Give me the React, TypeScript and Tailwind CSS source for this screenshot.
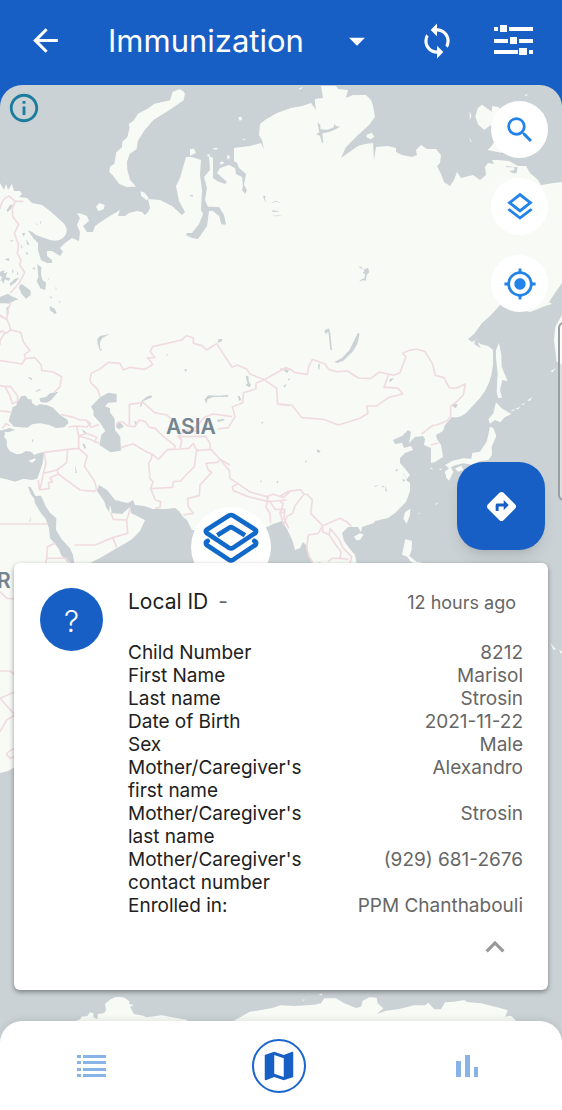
import React from "react";
import {
  MdArrowBack,
  MdArrowDropDown,
  MdDirections,
  MdInfoOutline,
  MdKeyboardArrowUp,
  MdMap,
  MdMyLocation,
  MdOutlineLayers,
  MdSearch,
  MdSync,
} from "react-icons/md";

const fields = [
  { label: "Child Number", value: "8212" },
  { label: "First Name", value: "Marisol" },
  { label: "Last name", value: "Strosin" },
  { label: "Date of Birth", value: "2021-11-22" },
  { label: "Sex", value: "Male" },
  { label: "Mother/Caregiver's first name", value: "Alexandro" },
  { label: "Mother/Caregiver's last name", value: "Strosin" },
  { label: "Mother/Caregiver's contact number", value: "(929) 681-2676" },
  { label: "Enrolled in:", value: "PPM Chanthabouli" },
];

function FilterIcon() {
  return (
    <svg width="39" height="31" viewBox="0 0 39 31" fill="currentColor" aria-hidden="true">
      <path d="M0 2h4v4H0zM6 0h7v7H6zM15 2h24v4H15zM0 14h14v4H0zM16 12h7v7h-7zM25 14h14v4H25zM0 25h24v4H0zM25 23h8v7h-8zM35 25h4v4h-4z" />
    </svg>
  );
}

function ListIcon() {
  return (
    <svg width="29" height="22" viewBox="0 0 29 22" fill="currentColor" aria-hidden="true">
      <path d="M0 0h4v3H0zM6 0h23v3H6zM0 6h4v3H0zM6 6h23v3H6zM0 13h4v3H0zM6 13h23v3H6zM0 19h4v3H0zM6 19h23v3H6z" />
    </svg>
  );
}

function ChartIcon() {
  return (
    <svg width="22" height="22" viewBox="0 0 22 22" fill="currentColor" aria-hidden="true">
      <path d="M0 6h5v16H0zM9 0h5v22H9zM18 12h4v10h-4z" />
    </svg>
  );
}

function LayersMarker() {
  return (
    <svg
      width="58"
      height="52"
      viewBox="0 0 174 156"
      fill="none"
      stroke="#1169c9"
      strokeWidth="14"
      strokeLinejoin="round"
      strokeLinecap="round"
      aria-hidden="true"
    >
      <path d="M80 11 14 53Q9 58 14 63L80 107Q87 111 94 107L160 63Q165 58 160 53L94 11Q87 7 80 11Z" />
      <path d="M46 70 82 47Q87 44 92 47L129 70" strokeLinecap="butt" />
      <path d="M17 87Q8 91 14 99L80 143Q87 147 94 143L160 99Q166 91 157 87" />
    </svg>
  );
}

function WorldMap() {
  return (
    <svg
      className="absolute inset-0 h-full w-full"
      viewBox="0 85 562 1025"
      preserveAspectRatio="xMidYMin slice"
      aria-hidden="true"
    >
      <rect y="85" width="562" height="1025" fill="#cad2d5" />
      <g fill="#f8faf6">
        <path d="M0 183 4 190 6 184 8 190 12 184 14 191 20 191 22 194 19 197 27 198 32 203 42 205 50 211 60 220Q69 227 66 234Q61 243 50 240L36 235 30 231 33 238 38 243 38 250 41 260 47 263 52 263 52 260 47 256 47 251 52 251 60 256 63 252 60 248 65 243 72 238 79 241 80 232 77 225 80 218 77 213 82 214 87 216 89 221 83 226 87 232 93 232 95 226 105 219 120 210 118 216 125 216 129 213 137 211 142 212 145 215 148 212 150 208 148 199 160 200 172 206 182 215 185 212 179 201 176 186 180 178 186 157 192 157 201 160 200 175 202 190 201 210 203 214 199 224 192 233 187 233 186 235 192 238 198 239 207 226 209 211 216 209 220 214 222 224 226 224 224 215 219 207 208 207 205 200 207 188 204 177 210 170 209 156 213 158 213 178 217 181 225 184 227 182 217 173 220 168 229 165 235 168 236 174 242 177 243 186 242 190 245 194 247 190 244 185 246 174 239 168 237 163 234 161 234 148 250 146 261 143 264 149 262 140 259 135 260 124 265 120 277 113 291 108 302 106 311 103 316 110 315 103 315 99 323 98 321 86 336 86 338 89 348 90 346 98 353 95 366 95 371 100 373 106 375 117 369 125 358 135 346 147 341 158 348 153 358 146 365 144 373 143 374 160 376 147 388 146 396 148 396 152 402 155 412 157 417 155 416 150 421 145 427 149 436 149 441 155 440 163 437 166 441 174 444 182 450 186 454 180 457 172 461 178 473 175 480 180 486 175 485 167 488 163 494 164 492 160 498 160 509 161 518 166 526 166 530 173 538 180 541 185 554 183 562 182 562 283 555 293 549 302 552 304 545 306 538 309 530 312 500 305 490 316 482 323 474 334 468 339 472 342 477 339 480 344 488 346 493 350 493 365Q491 385 480 398L467 412Q460 419 452 417L445 425 443 431 436 435 437 439 441 445 443 457 435 462 431 463 431 448 424 445 425 439 423 436 415 437 409 443 411 432 408 430 402 436 393 440 395 444 402 443 404 448 411 446 413 450 405 453 400 458 400 463 406 470 410 475 406 480 410 483 410 491 406 502 395 513 388 518 375 521 374 523 362 527 361 532 358 527 348 527 342 533 344 541 350 549 355 555 357 565 350 600 316 600 313 563 309 556 307 546 303 542 300 548 295 550 293 542 288 531 282 521 273 524 267 527 230 533 192 530 187 520 183 517 179 511 175 508 166 509 153 509 144 506 135 505 133 500 128 503 123 502 115 500 111 495 107 490 99 485 97 491 104 501 106 507 109 512 110 505 112 513 122 514 130 507 131 513 145 520 140 531 131 540 117 548 100 558 90 563 90 600 15 767 8 771 0 773Z" />
        <g transform="translate(0 80) scale(.3333)">
          <path d="m518 36 19-8q13 2 18 14l-4 19-46 31-45 28-28 33-18 29-4 25-21 15-8 23 1 25 8 29 18 21-28 1-22-9-20-26-10-10 2-16 13-9 6-34 17-15 1-17 15-13 7-28-3-13 14-8 14-22 31-16 18-14 47-10z" />
          <path d="m288 380 10-11 16 6-3 13-16 5zM570 208l12-2 6 13-18 8zM422 334l12 4 12 16-6 7-17-14zM715 112l8-2 4 8-8 5zM636 206l14-3 4 4-8 2zM681 227l6-2 3 10-8 3zM658 249l9-5 6 4-9 6zM726 177l14-1-8 4zM622 224l7-2 0 9-7-2z" />
        </g>
        <g transform="translate(281 0) scale(.3333)">
          <path d="M583 350 590 325 603 314 620 326 632 335 634 318 650 320 690 350 690 450 660 458 620 450 632 438 640 425 650 410 640 380 628 376 610 390 592 374ZM566 333l5 15-5 12zM564 410l9 17-5-3zM257 404l15-6 8 12-11 8-12-6zM730 286l10-5-3 7zM50 268l16-8-6 8z" />
        </g>
        <g transform="translate(280 300) scale(.3333)">
          <path d="M657 128 664 165 665 200 683 244 667 240 660 270 666 294 654 293 650 275 653 220 648 175 648 151zM648 307 665 325 694 342 674 352 661 367 645 360 630 371 625 358 640 340zM630 380 640 384 649 408 635 440 636 465 625 480 600 483 580 495 550 490 525 496 507 505 495 495 518 482 550 475 574 476 577 459 600 455 620 425 626 400zM494 515 512 501 520 515 507 542 500 535zM525 505 545 497 550 510 534 515zM391 626 390 645 380 671 370 656 375 637zM222 710 240 700 251 704 240 720 229 721zM376 718 396 722 395 750 388 768 410 785 425 788 420 798 392 785 382 770 366 764zM826 80 846 45 846 193 830 185 822 120zM450 505l10 4-5-6zM476 508l10-3-3 6zM812 214l16-10-11 13zM690 334l15-8-3 6zM705 327l17-7-7 8zM724 315l12-8-6 8zM742 301l17-11-10 13zM466 612l8-5-4 8zM414 641l6-3-2 5z" />
        </g>
        <g transform="translate(281 560) scale(.3333)">
          <path d="M807 248l18 20-7 2zM833 270l10 12v-8z" />
        </g>
        <g transform="translate(0 740) scale(.3333)">
          <path d="M218 846 240 838 245 830 262 828 270 817 280 820 280 832 292 838 294 822 312 820 318 810 315 792 330 779 345 772Q362 769 375 774L388 784 388 792 402 795 390 800 402 822 430 827 440 832 485 826 562 840 562 850 218 850zM690 850 720 832 750 815 770 812 800 807 820 803 843 795 843 850z" />
        </g>
        <g transform="translate(281 740) scale(.3333)">
          <path d="M0 796 40 798 100 794 120 790 130 775 165 775 190 790 225 804 240 800 245 782 265 772 287 773 290 790 307 805 288 822 315 812 350 808 400 796 432 796 442 788 460 808 480 808 492 787 520 785 550 780 558 786 600 790 660 805 680 811 673 830 690 827 708 846 708 850 0 850zM112 765l10-5 2 6zM63 780l8-2-3 4z" />
        </g>
      </g>
      <g fill="#cad2d5">
        <g transform="translate(0 300) scale(.3333)">
          <path d="M64 288 77 287 85 298 94 298 97 310 110 318 118 313 140 315 157 322 181 345 203 360 205 370 192 382 168 384 145 374 120 370 97 373 82 383 42 380 26 363 38 322 50 316 50 308zM118 295 138 291 150 280 175 275 154 300 140 308 122 307zM273 320 300 292 325 278 350 282 350 307 325 308 315 319 330 325 330 337 344 356 345 390 361 410 363 452 332 457 298 435 304 404 316 393 299 367 281 347 280 331zM349 368 360 367 372 380 357 388 349 382z" />
          <path d="M0 390 10 393 16 400 12 410 20 420 21 440 30 454 50 463 64 461 78 453 93 455 103 465 115 460 132 456 128 490 112 536 96 540 70 536 45 545 20 538 0 533zM0 393 28 384 46 389 25 397zM84 560 92 562 100 575 106 588 123 587 138 620 150 638 169 655 168 690 185 718 210 745 219 765 225 800 205 790 183 765 177 748 165 732 150 714 147 685 137 656 120 635 105 610 103 596 92 582z" />
          <path d="M614 298 625 286 660 287 684 284 685 290 640 291 623 298 619 312zM292 118 300 108 330 102 308 113 300 126 300 145 307 150 300 152 293 132zM420 318 425 303 440 290 453 286 458 291 446 296 430 303 423 322zM553 208l8 0-4 9zM655 118l13-1-4 8-10 3zM738 228l7 0 2 17 6 10-5 7-12-7 7-4-4-15zM713 289l6-1 5 12-6 3zM650 360l20-4 5 5-20 5zM84 231l11 3 2 6-9-4zM104 276l12-8 8 2-10 4zM403 363l8 3-4 13zM247 431l6 0 5 12-4 5zM245 388l12 7 2 10-7-6zM149 18l15 8 6 13-6 3-14-11zM225 495l6 23-4 2zM76 668l13-5 5-14-2 14z" />
          <path d="M0 0h36L20 10H0zM95 418l5 1-1 10zM784 365l6 1-4 7zM830 543l6 1-4 7zM780 545l6-6-3 9zM850 210l17-1-4 9zM500 162l5 2-5 3z" />
          <path d="M85 483l20-8 3 4-12 9z" fill="#f8faf6" />
        </g>
        <g transform="translate(0 80) scale(.3333)">
          <path d="M64 611 78 621 92 632 92 645 78 656 65 642 56 622zM0 651 24 641 33 648 56 658 42 662 27 671 0 667zM112 553l12 9-1 22 5 17 10 7-2 23-15-6-11-22 5-12zM83 450l18 9 5 16-13-10zM20 390l10-14 9-3-6 14-10 9zM79 478l10 16-8 0zM63 493l5 8-4 5zM97 565l8-3-1 8zM14 538l12-4 3 9-8-2zM77 516l8 3-4 7zM66 460l10-2-5 12zM0 575l15-5-5 10 12-3-5 14 14 4-4 8-12-5-5 13-5-10-5 3 7-12-7-5zM30 610l15-14 12-3-10 14-17 12zM19 685l8-8-2 28-5-3zM36 567l5 5-3 11zM50 572l6 10-4 3zM30 482l12-3-8 6z" />
          <path d="M789 347l9 2-4 6 6 15-8-12zM811 371l15-9 19 8-19-5zM817 391l23 3-22 3zM815 408l35-4-20 5zM120 428l4-8-1 12zM109 430l4 3-4 3zM570 345l10 0-2 5-7-1zM609 380l32 0 17 5 10 14 0 28 11 7-15-1-6-24-20-17-26 0zM149 650l8 0-3 6zM145 593l3 4-2 4zM167 620l3 8-3 2zM176 663l6 2-4 4z" />
        </g>
        <g transform="translate(280 300) scale(.3333)">
          <path d="M234 98 239 102 232 132 219 154 190 182 172 189 163 186 186 174 208 151 219 128zM114 196l6-6-2 19-3-1zM328 238l14-5-7 9-6 5zM520 310l13 3-5 12-10-6zM110 448l12 4-5 7-5-3zM14 208l10 3-5 9zM22 236l9 0-4 6zM10 257l10-5-6 11zM132 94l15-9 4 15 4 44 3 6-7-1-6-55-6 8zM345 511l9-5-3 9zM370 519l17 25-17-22zM366 538l10 1-5 7zM316 556l5 17 4 2-9-2zM283 558l13-2-9 5zM305 557l8 1-5 5zM75 481l6 2-4 5zM584 122l15-9-4 18 8 14-20-12zM115 785l10 4-10 1z" />
        </g>
        <g transform="translate(281 0) scale(.3333)">
          <path d="M109 367 118 375 118 388 140 389 158 382 160 371 165 378 177 380 164 388 145 396 124 400 127 430 122 427 117 407 105 403 115 397zM232 800l9 0 5 10 15-7 4 13-8 9-2 17-10-1-11 5 8-8 9-4 1-12-7-4 6-6zM675 498l35 4-3 18-12 0-10-7 15-3 0-8-25 0zM130 990l15-4-10 5z" />
        </g>
      </g>
      <g fill="none" stroke="#f0dce0" strokeWidth="5" strokeLinejoin="round">
        <g transform="translate(0 80) scale(.3333)">
          <path d="M0 387Q5 355 27 348L46 364 70 364M46 364 37 385 38 410 56 433 43 460 56 495 52 520 63 540 59 555 74 577 57 610 30 640M33 665 24 690 20 720M0 708 18 717" />
        </g>
        <g transform="translate(0 300) scale(.3333)">
          <path d="M0 45 20 58 27 72 32 90 18 100 5 92 0 98M32 90 62 97 70 125 90 152 73 164 76 176 66 192 30 186 0 182M76 176 104 173 124 195 125 211 160 216 185 230 180 260 164 276M0 135 0 122 14 99M0 257 15 260 32 260 53 287 53 304 37 311 31 290 15 260M0 333 20 334 32 337M7 385 18 371 30 377M183 343 220 352 240 360 258 360 272 371 260 381 230 378 205 381M258 360 273 382 297 374M230 378 236 408 270 418 297 430M236 408 260 400 290 412 284 430M236 408 236 445 262 468 253 498 284 545 290 568M300 290 293 268 274 250 270 240 274 220 300 207 325 187 360 190 370 210 390 202 435 208 458 194 448 178 442 174 465 172 451 155 458 140 545 120 560 107 580 114 580 130 605 137 620 150 650 131 696 202 711 195 740 207 750 222 793 239 857 203 870 207M793 239 768 250 768 267 731 278 728 308 697 320 705 350 685 383 652 387M697 350 640 342 613 352 590 380 570 394M388 375 388 313 430 308 464 338 500 345 520 362M388 378 404 380 418 360 436 365 448 382 466 385 480 400 525 438 523 447 503 448M348 377 355 366 368 366 384 378 404 380M362 445 375 438 400 432 442 457 456 462 454 476 446 490 450 536 459 545 452 566 518 562 520 545 542 543 558 525 583 500 588 463 590 452 633 448 660 478 690 495M456 462 475 478 503 449 540 447 567 445 580 430 588 447 598 453M540 447 545 422 534 410 560 390 600 395M545 422 540 410 617 409 630 430 630 450M793 239 830 265 833 312 870 317M660 478 653 487 618 490 625 510 635 517 600 555 598 587 563 595 565 620 580 640 550 645M452 566 466 600 482 605 480 622 465 625M660 478 688 512 690 535 714 551 750 576 800 590 805 605 745 590 700 572 697 560 714 551M800 590 820 583 850 593 870 575M805 605 860 600M805 590 798 622 810 640 812 670M810 605 825 628 855 628 852 655 866 685M132 457 203 448 240 445M132 457 138 490 130 520 171 510 200 488 203 448M130 520 120 570 148 565 145 548 158 546 150 534 175 522 240 570 285 574M171 510 175 522M0 672 145 672M115 540 118 570M285 574 290 568M332 637 340 658 380 660 387 640 390 625M380 660 383 700 338 713 350 742M338 713 285 735 223 735M166 730 142 740 140 775 197 774 210 790M137 790 140 775" />
        </g>
        <g transform="translate(280 300) scale(.3333)">
          <path d="M0 207 30 207 45 218 82 223 86 200 97 178 135 192 146 208 170 215 202 213 235 234 272 236 298 216 342 226 360 218 378 170 368 160Q385 150 410 147L435 155 457 190 466 226 492 233 508 264 530 264 556 252 550 285 527 308 512 318 512 350 500 363 470 375 458 376 425 402M0 313 35 315 66 353 130 358 175 375 240 355 264 340 260 318 290 318 325 293 368 282 355 265 325 262 312 262 325 226M452 435 476 429M0 589 25 574 62 569 72 583 82 583 97 600 92 640 128 677 180 655 200 665 215 680M72 583 45 617 38 640 20 650 12 675 0 640M0 605 10 610 0 640 15 635M128 677 115 700 85 705 80 745 88 770 100 790M128 677 128 695 148 705 150 685 175 715 190 745 215 770 210 790M148 705 168 735 183 755 180 775 155 775 145 785M180 775 205 778" />
        </g>
        <g transform="translate(0 560) scale(.3333)">
          <path d="M0 95 20 115 45 117M0 333 30 333 45 345M0 415 45 465 20 480 0 515M0 415 45 395M45 565Q20 575 20 585L32 595 45 590" />
        </g>
      </g>
      <g fill="#748591" className="font-['Inter',sans-serif] text-[21px] font-semibold">
        <text x="166" y="434">ASIA</text>
        <text x="-3" y="588">R</text>
      </g>
    </svg>
  );
}

function MapButton({ label, children }: { label: string; children: React.ReactNode }) {
  return (
    <button
      type="button"
      aria-label={label}
      className="flex size-[57px] items-center justify-center rounded-full bg-white text-[#2483e8]"
    >
      {children}
    </button>
  );
}

export default function App() {
  return (
    <div className="flex min-h-screen flex-col bg-[#175ec5] font-['Inter','Roboto',sans-serif]">
      <header className="flex h-[85px] items-center pr-[29px] pb-1 pl-[27px] text-white">
        <button type="button" aria-label="Back">
          <MdArrowBack size={37} />
        </button>
        <h1 className="ml-11 text-[31px] leading-10">Immunization</h1>
        <button type="button" aria-label="Choose program" className="ml-[34px]">
          <MdArrowDropDown size={38} />
        </button>
        <button type="button" aria-label="Sync" className="ml-auto">
          <MdSync size={38} />
        </button>
        <button type="button" aria-label="Filter" className="ml-[38px]">
          <FilterIcon />
        </button>
      </header>

      <main className="relative flex flex-1 flex-col overflow-hidden rounded-t-[22px]">
        <WorldMap />

        <div className="relative flex items-start justify-between pt-4 pr-[14px] pl-[7px]">
          <button type="button" aria-label="Map information" className="-mt-[10px] text-[#1b7c9d]">
            <MdInfoOutline size={34} />
          </button>
          <div className="flex flex-col gap-5">
            <MapButton label="Search">
              <MdSearch size={34} />
            </MapButton>
            <MapButton label="Layers">
              <MdOutlineLayers size={34} />
            </MapButton>
            <MapButton label="My location">
              <MdMyLocation size={34} />
            </MapButton>
          </div>
        </div>

        <div className="absolute top-[237px] -right-3 h-[179px] w-4 rounded-md border-2 border-[#9b9fa1] bg-white/30" />

        <div className="absolute top-[422px] left-[191px] flex h-20 w-20 justify-center rounded-full bg-white pt-[5px]">
          <LayersMarker />
        </div>

        <button
          type="button"
          aria-label="Directions"
          className="relative mt-[150px] mr-[17px] flex size-[88px] items-center justify-center self-end rounded-[26px] bg-[#175ec5] text-white shadow-lg"
        >
          <MdDirections size={35} />
        </button>

        <section className="relative mx-[14px] mt-[13px] mb-[31px] flex min-h-[427px] gap-[25px] rounded-md bg-white pt-[25px] pr-[25px] pl-[26px] shadow-[0_2px_5px_rgba(0,0,0,0.4)]">
          <div className="flex size-[63px] shrink-0 items-center justify-center rounded-full bg-[#175ec5] pt-1 text-[30px] font-light text-white">
            ?
          </div>
          <div className="flex flex-1 flex-col">
            <div className="flex h-7 items-center justify-between pr-[7px]">
              <h2 className="text-[21px] text-[#212121]">
                Local ID <span className="ml-1 text-[#666]">-</span>
              </h2>
              <span className="text-[18px] text-[#666]">12 hours ago</span>
            </div>
            <dl className="mt-[25px] text-[19px] leading-[23px]">
              {fields.map((field) => (
                <div key={field.label} className="flex justify-between">
                  <dt className="w-[190px] text-[#212121]">{field.label}</dt>
                  <dd className="text-right text-[#666]">{field.value}</dd>
                </div>
              ))}
            </dl>
            <button type="button" aria-label="Collapse" className="mt-[11px] mr-[9px] self-end text-[#999]">
              <MdKeyboardArrowUp size={38} />
            </button>
          </div>
        </section>

        <nav className="relative mt-auto grid h-[89px] grid-cols-3 items-center rounded-t-[22px] bg-white pr-1 shadow-[0_-2px_6px_rgba(0,0,0,0.08)]">
          <button type="button" aria-label="List" className="flex justify-center pr-1 text-[#87b3e6]">
            <ListIcon />
          </button>
          <button
            type="button"
            aria-label="Map"
            className="flex size-[54px] items-center justify-center justify-self-center rounded-full border-2 border-[#1b66ca] text-[#175ec5]"
          >
            <MdMap size={38} />
          </button>
          <button type="button" aria-label="Charts" className="flex justify-center pl-1 text-[#87b3e6]">
            <ChartIcon />
          </button>
        </nav>
      </main>
    </div>
  );
}
